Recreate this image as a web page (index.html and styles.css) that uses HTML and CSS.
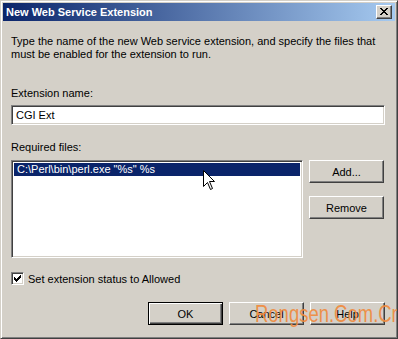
FILE: index.html
```html
<!DOCTYPE html>
<html lang="en">
<head>
	<meta charset="UTF-8">
	<title>New Web Service Extension</title>
	<link rel="stylesheet" href="styles.css">
</head>
<body>
	<div class="window">
		<div class="titlebar">
			<span class="title">New Web Service Extension</span>
			<span class="close-btn">
				<svg width="8" height="7" viewBox="0 0 8 7"><path d="M0 0h2v1H0zM6 0h2v1H6zM1 1h2v1H1zM5 1h2v1H5zM2 2h4v1H2zM3 3h2v1H3zM2 4h4v1H2zM1 5h2v1H1zM5 5h2v1H5zM0 6h2v1H0zM6 6h2v1H6z" fill="#000"/></svg>
			</span>
		</div>
		<div class="dialog-body">
			<p class="desc">Type the name of the new Web service extension, and specify the files that must be enabled for the extension to run.</p>
			<div class="field-label">Extension name:</div>
			<div class="textbox">CGI Ext</div>
			<div class="field-label files-label">Required files:</div>
			<div class="files-row">
				<div class="listbox">
					<div class="list-item selected">C:\Perl\bin\perl.exe "%s" %s</div>
				</div>
				<div class="side-buttons">
					<span class="btn">Add...</span>
					<span class="btn">Remove</span>
				</div>
			</div>
			<div class="check-row">
				<span class="checkbox">
					<svg width="7" height="7" viewBox="0 0 7 7"><path d="M6 0h1v1H6zM5 1h2v1H5zM0 2h1v1H0zM4 2h3v1H4zM0 3h2v1H0zM3 3h3v1H3zM0 4h5v1H0zM1 5h3v1H1zM2 6h1v1H2z" fill="#000"/></svg>
				</span>
				<span>Set extension status to Allowed</span>
			</div>
			<div class="footer">
				<span class="btn default">OK</span>
				<span class="btn">Cancel</span>
				<span class="btn">Help</span>
			</div>
		</div>
		<svg class="cursor" width="12" height="20" viewBox="0 0 12 20"><path d="M0.5 0.5V16.5L4.5 12.5L7.5 19.5L9.5 18.5L6.5 11.5H11.5Z" fill="#fff" stroke="#000" stroke-width="1"/></svg>
		<div class="watermark">Rongsen.Com.Cn</div>
	</div>
</body>
</html>
```

FILE: styles.css
```css
* {
	box-sizing: border-box;
}
body {
	margin: 0;
	font-family: "Liberation Sans", Arial, sans-serif;
	font-size: 11px;
	color: #000;
	background: #d4d0c8;
}

.window {
	position: relative;
	width: 398px;
	height: 339px;
	background: #d4d0c8;
	border: 1px solid;
	border-color: #d4d0c8 #404040 #404040 #d4d0c8;
	box-shadow: inset 1px 1px #fff, inset -1px -1px #808080;
	padding: 2px;
	overflow: hidden;
}

.titlebar {
	display: flex;
	align-items: center;
	justify-content: space-between;
	height: 18px;
	padding: 0 3px 0 3px;
	background: linear-gradient(to right, #0a246a, #a6caf0);
	color: #fff;
}
.title {
	font-weight: bold;
	font-size: 11px;
}
.close-btn {
	display: flex;
	align-items: center;
	justify-content: center;
	width: 16px;
	height: 14px;
	background: #d4d0c8;
	border: 1px solid;
	border-color: #fff #404040 #404040 #fff;
	box-shadow: inset -1px -1px #808080;
	padding-bottom: 1px;
}

.dialog-body {
	display: flex;
	flex-direction: column;
	padding: 14px 10px 0 8px;
}
.desc {
	margin: 0;
	line-height: 13px;
}
.field-label {
	margin-top: 26px;
	line-height: 13px;
}
.files-label {
	margin-top: 16px;
}
.textbox {
	margin-top: 5px;
	height: 20px;
	line-height: 18px;
	padding: 0 4px;
	background: #fff;
	border: 1px solid;
	border-color: #808080 #fff #fff #808080;
	box-shadow: inset 1px 1px #404040, inset -1px -1px #d4d0c8;
}

.files-row {
	display: flex;
	gap: 6px;
	margin-top: 6px;
}
.listbox {
	width: 292px;
	height: 98px;
	padding: 2px;
	background: #fff;
	border: 1px solid;
	border-color: #808080 #fff #fff #808080;
	box-shadow: inset 1px 1px #404040, inset -1px -1px #d4d0c8;
}
.list-item {
	height: 13px;
	line-height: 13px;
	padding-left: 3px;
}
.list-item.selected {
	background: #0a246a;
	color: #fff;
}
.side-buttons {
	display: flex;
	flex-direction: column;
	gap: 13px;
}

.btn {
	display: flex;
	align-items: center;
	justify-content: center;
	width: 75px;
	height: 23px;
	background: #d4d0c8;
	border: 1px solid;
	border-color: #fff #404040 #404040 #fff;
	box-shadow: inset -1px -1px #808080;
}
.btn.default {
	border-color: #000;
	box-shadow: inset 1px 1px #fff, inset -1px -1px #404040, inset -2px -2px #808080;
}

.check-row {
	display: flex;
	align-items: center;
	gap: 4px;
	margin-top: 14px;
}
.checkbox {
	display: flex;
	align-items: center;
	justify-content: center;
	width: 13px;
	height: 13px;
	background: #fff;
	border: 1px solid;
	border-color: #808080 #fff #fff #808080;
	box-shadow: inset 1px 1px #404040, inset -1px -1px #d4d0c8;
}

.footer {
	display: flex;
	justify-content: flex-end;
	gap: 6px;
	margin-top: 17px;
}

.cursor {
	position: absolute;
	left: 202px;
	top: 169px;
}
/* watermark stamped over the bottom right of the shot */
.watermark {
	position: absolute;
	left: 254px;
	top: 299px;
	font-family: "Liberation Sans", Arial, sans-serif;
	font-size: 24px;
	color: #f08a3c;
	white-space: nowrap;
	opacity: 0.9;
	transform: scaleX(0.77);
	transform-origin: left top;
}
```
